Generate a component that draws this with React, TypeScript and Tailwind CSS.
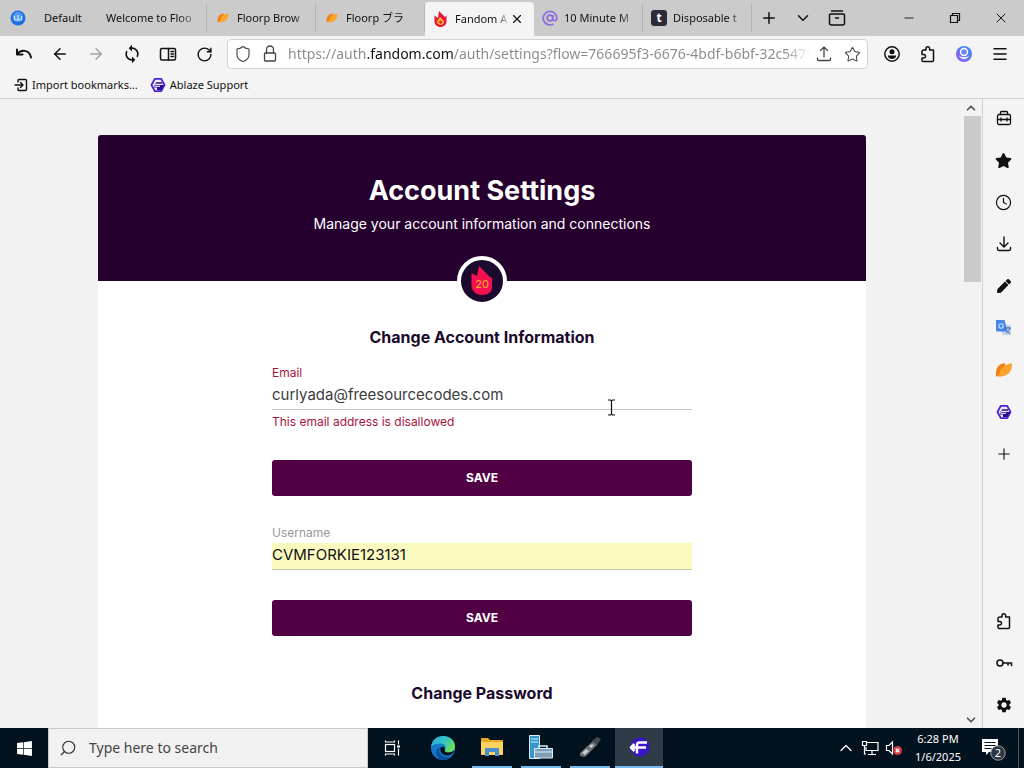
import { ReactNode, useState } from "react";
import {
  ArrowLeft,
  ArrowRight,
  ChevronDown,
  ChevronUp,
  Clock,
  Menu,
  Minus,
  Plus,
  RotateCw,
  Search,
  Shield,
  Star,
  X,
} from "lucide-react";
import { FaPen, FaStar, FaWindows } from "react-icons/fa";
import { MdSettings, MdSync } from "react-icons/md";

type IconProps = { size?: number };

const line = {
  fill: "none",
  stroke: "currentColor",
  strokeLinecap: "round",
  strokeLinejoin: "round",
} as const;

const UndoIcon = () => (
  <svg width="18" height="18" viewBox="0 0 18 18" {...line} strokeWidth="2">
    <path d="M2 4.500v5h5.500" />
    <path d="M2.500 9C5 5 14.500 3.500 16 12.500" />
  </svg>
);

const ReaderIcon = () => (
  <svg width="18" height="18" viewBox="0 0 18 18" {...line} strokeWidth="1.500">
    <rect x="1.500" y="3.500" width="15" height="11.500" rx="1.500" />
    <path d="M9.500 3.500V15M12 6.500h2.500M12 9h2.500M12 11.500h2.500" />
  </svg>
);

const LockIcon = () => (
  <svg width="16" height="18" viewBox="0 0 16 18" {...line} strokeWidth="1.300">
    <rect x="2.500" y="8" width="11" height="8" rx="1" />
    <path d="M4.500 8V4.500a3.500 3.500 0 0 1 7 0V8" />
  </svg>
);

const ShareIcon = () => (
  <svg width="16" height="16" viewBox="0 0 16 16" {...line} strokeWidth="1.300">
    <path d="M8 11V1M4.500 4.500 8 1l3.500 3.500M1.500 12v1.500a1 1 0 0 0 1 1h11a1 1 0 0 0 1-1V12" />
  </svg>
);

const RestoreIcon = () => (
  <svg width="12" height="12" viewBox="0 0 12 12" fill="none" stroke="currentColor" strokeWidth="1.200">
    <path d="M1.500 3.500h7v7h-7zM3.500 3.500v-2h7v7h-2" />
  </svg>
);

const DownloadIcon = () => (
  <svg width="18" height="18" viewBox="0 0 18 18" {...line} strokeWidth="1.400">
    <path d="M9 2v9.500M5 8l4 4 4-4M2.500 12.500V14A1.500 1.500 0 0 0 4 15.500h10a1.500 1.500 0 0 0 1.500-1.500v-1.500" />
  </svg>
);

const AccountIcon = () => (
  <svg width="18" height="18" viewBox="0 0 18 18">
    <circle cx="9" cy="9" r="7.200" fill="none" stroke="currentColor" strokeWidth="1.500" />
    <circle cx="9" cy="6.800" r="2.500" fill="currentColor" />
    <path d="M4.800 10.500h8.400c0 2-1.800 3.500-4.200 3.500s-4.200-1.500-4.200-3.500z" fill="currentColor" />
  </svg>
);

const ProfileIcon = () => (
  <svg width="18" height="18" viewBox="0 0 18 18">
    <defs>
      <linearGradient id="profile" x1="0" y1="1" x2="1" y2="0">
        <stop offset="0" stopColor="#9a4cf0" />
        <stop offset="1" stopColor="#2e9df4" />
      </linearGradient>
    </defs>
    <circle cx="9" cy="9" r="8" fill="url(#profile)" />
    <path d="M4 10.500c1 5 9 5 10 0-2 2-8 2-10 0z" fill="#dfe6ff" />
    <circle cx="9" cy="7" r="3.500" fill="#6f86f5" stroke="#fff" strokeWidth="1.400" />
  </svg>
);

const PuzzleIcon = () => (
  <svg width="18" height="18" viewBox="0 0 18 18" {...line} strokeWidth="1.500">
    <path d="M3 6.500A1.500 1.500 0 0 1 4.500 5H7V3.500a1.800 1.800 0 0 1 3.600 0V5h3.900v10.500a1 1 0 0 1-1 1H4a1 1 0 0 1-1-1V13h1.700a1.800 1.800 0 0 0 0-3.600H3z" />
  </svg>
);

const ToolboxIcon = () => (
  <svg width="18" height="18" viewBox="0 0 18 18" {...line} strokeWidth="1.300">
    <path d="M5.500 5.500V3.500a1 1 0 0 1 1-1h5a1 1 0 0 1 1 1v2" />
    <rect x="2.500" y="5.500" width="13" height="10" rx="1.500" />
    <path d="M2.500 10.500h13M6 9v3M12 9v3" />
  </svg>
);

const TabBoxIcon = () => (
  <svg width="18" height="18" viewBox="0 0 18 18" {...line} strokeWidth="1.500">
    <path d="M3.500 2h11M2.500 5h13a1 1 0 0 1 1 1v8a2 2 0 0 1-2 2h-11a2 2 0 0 1-2-2V6a1 1 0 0 1 1-1zM7.500 9h3" />
  </svg>
);

const ImportIcon = () => (
  <svg width="14" height="14" viewBox="0 0 14 14" {...line} strokeWidth="1.400">
    <path d="M4 4V2.500a1 1 0 0 1 1-1h6.500a1 1 0 0 1 1 1v9a1 1 0 0 1-1 1H5a1 1 0 0 1-1-1V10M1 7h7.500M6.500 4.500 9 7 6.500 9.500" />
  </svg>
);

const AblazeIcon = ({ size = 16 }: IconProps) => (
  <svg width={size} height={size} viewBox="0 0 16 16">
    <path
      d="M4.800 1.800h6.400L14.500 8l-3.300 6.200H4.800L1.500 8z"
      fill="#eeeaff"
      stroke="#4a1fd0"
      strokeWidth="1.800"
      strokeLinejoin="round"
    />
    <path d="M6 5.200h6v1.500H6c-1 0-1.500.6-1.500 1.300h9.500L11.500 13H7v-2.500H4" fill="#2a0d8c" />
    <path d="M5 9.300h5" stroke="#eeeaff" strokeWidth="1.200" />
  </svg>
);

const LeafIcon = ({ size = 16 }: IconProps) => (
  <svg width={size} height={size} viewBox="0 0 16 16">
    <path d="M1 14C0 7 3 2 9 2c1 5-1 10-8 12z" fill="#f57c17" />
    <path d="M3 14c1-7 5-11 12-12 .5 7-3 12-12 12z" fill="#fba52c" />
  </svg>
);

const FlameIcon = () => (
  <svg width="16" height="16" viewBox="0 0 16 16">
    <path d="M6 0 12 6l1.500-1.500V10.500c0 3-2.500 5.500-6 5.500S1.500 13.500 1.500 10.500V4.500L5 7z" fill="#e5173f" />
    <path d="M7 6l4 4c0 2.500-1.200 4-3.500 4S4 12.500 4 10.500z" fill="#ffb62e" />
    <path d="M7.500 9.500l2 1.500-2 2-2-2z" fill="#e5173f" />
  </svg>
);

const TranslateIcon = () => (
  <svg width="18" height="18" viewBox="0 0 18 18">
    <rect x="7" y="6" width="9" height="10" rx="1" fill="#c5d3e8" />
    <path d="M1 1h8.500l3 11.500H2a1 1 0 0 1-1-1z" fill="#4385e8" />
    <circle cx="6" cy="7" r="2.200" fill="none" stroke="#cfe1ff" strokeWidth="1.100" />
    <path d="M10 9h6M13 8v1m2 0c-.5 2-2 4-4 5m0-3 4 4" stroke="#3f6fb8" strokeWidth="1" fill="none" />
  </svg>
);

const KeyIcon = () => (
  <svg width="18" height="18" viewBox="0 0 18 18" {...line} strokeWidth="1.600">
    <circle cx="5" cy="9" r="3" />
    <path d="M8 9h8.500v2.500M13 9v2" />
  </svg>
);

const TaskViewIcon = () => (
  <svg width="18" height="18" viewBox="0 0 18 18" fill="none" stroke="#fff" strokeWidth="1.200">
    <rect x="2.500" y="5.500" width="9" height="7" />
    <path d="M2.500 1.500V3h9V1.500M2.500 16.500V15h9v1.500M15.500 1.500v4M15.500 9.500v7" />
    <path d="M14 6.500h3v2h-3z" fill="#fff" stroke="none" />
  </svg>
);

const EdgeIcon = () => (
  <svg width="26" height="26" viewBox="0 0 26 26">
    <defs>
      <linearGradient id="edge-top" x1="0" y1="0" x2="1" y2="0.500">
        <stop offset="0" stopColor="#2aa7df" />
        <stop offset="0.600" stopColor="#35c6c4" />
        <stop offset="1" stopColor="#6fdc5c" />
      </linearGradient>
    </defs>
    <circle cx="13" cy="13" r="12" fill="#1479c9" />
    <path d="M1.200 11.500C2 5 7 1 13 1c7 0 12 4.500 12 10.500 0 4-3 6-6.500 6-3 0-4.500-1.300-3.500-2.800 2-3-.5-6.200-4.500-6.200-4 0-7.500 1-9.300 3z" fill="url(#edge-top)" />
    <path d="M9.500 12c-2 6 3 11.500 11 10-2.500 2.500-6 3.500-9.500 2.800C5 22.500 4.500 14 9.500 12z" fill="#0c4f9e" />
    <path d="M15 14.700c-1 1.500.5 2.800 3.500 2.800 2 0 4.200-.7 5.500-2-1 3.500-3.500 5-6.500 5-4.500 0-8-3-7-8 1.500-1.500 5-.5 4.500 2.200z" fill="#03121f" />
  </svg>
);

const FolderIcon = () => (
  <svg width="24" height="22" viewBox="0 0 24 22">
    <path d="M1 3a1 1 0 0 1 1-1h6l2 2h12a1 1 0 0 1 1 1v4H1z" fill="#eba827" />
    <path d="M1 6h22v13H1z" fill="#fdd25f" />
    <path d="M5 20v-7a1 1 0 0 1 1-1h12a1 1 0 0 1 1 1v7h-4v-4H9v4z" fill="#4a8ed0" />
  </svg>
);

const ServerIcon = () => (
  <svg width="26" height="26" viewBox="0 0 26 26" stroke="#d8eefc" strokeWidth="1">
    <path d="M1.500 1.500h10v23h-10z" fill="#3596cc" />
    <path d="M3 5h7M3 8h7" />
    <path d="M11 14v-2h8v2" fill="none" strokeWidth="1.500" />
    <path d="M6.500 14.500h18v9.500h-18z" fill="#7f9db4" />
    <path d="M6.500 18h18" />
  </svg>
);

const DriveIcon = () => (
  <svg width="24" height="22" viewBox="0 0 24 22">
    <path d="M2 17 15 5l5 3L7 21l-5-1z" fill="#6d7173" />
    <path d="M14 5l5-4 4 2-4 6z" fill="#45494b" />
    <path d="M4 17l4-4 3 2-4 4zM11 10l3-2 2 1.500-3 2.500z" fill="#c9cccd" />
  </svg>
);

const FloorpIcon = () => (
  <svg width="24" height="24" viewBox="0 0 24 24">
    <circle cx="13" cy="12" r="9.500" fill="#3a14c9" />
    <path d="M20 7.500h-7.500c-1.500 0-2.500 1-2.500 2.500v8.500M4 12.500h15M7.500 9 4 12.500 7.500 16" fill="none" stroke="#fff" strokeWidth="2.500" strokeLinejoin="round" />
  </svg>
);

const GlobeIcon = () => (
  <svg width="16" height="16" viewBox="0 0 16 16">
    <circle cx="8" cy="8" r="7.500" fill="#1f6fe0" />
    <circle cx="8" cy="7" r="5" fill="#4f9bf5" />
    <path d="M4.500 6v4M8 5v5M11.500 6v4M4.500 10h7" stroke="#d4e8ff" strokeWidth="1.200" fill="none" />
  </svg>
);

const MailIcon = () => (
  <svg width="16" height="16" viewBox="0 0 16 16" fill="none" stroke="#8d6ae0" strokeWidth="1.700">
    <circle cx="8" cy="8" r="2.800" />
    <path d="M10.800 5v4c0 2.500 4 2.500 4-1A6.800 6.800 0 1 0 11.500 14" />
  </svg>
);

const TIcon = () => (
  <span className="flex size-4 items-center justify-center rounded-[3px] bg-[#2b2b3c] text-xs font-bold leading-4 text-white">
    t
  </span>
);

const AvatarFlame = () => (
  <svg width="24" height="30" viewBox="0 0 24 30">
    <path d="M9 0 20 11l2 1v9c0 5-4 8-9.500 8S2 26 1.500 20V7L7 10z" fill="#f5104f" />
    <text x="12" y="22" textAnchor="middle" fontSize="11" fontFamily="Inter, sans-serif" fill="#ffb02e">
      20
    </text>
  </svg>
);

const NetworkIcon = () => (
  <svg width="18" height="16" viewBox="0 0 18 16" fill="none" stroke="#fff" strokeWidth="1.200">
    <path d="M6 2.500h11v8H5V7M11 10.500V14M7 14.500h8M1.500 1.500h4v4h-4zM3.500 5.500V14H5" />
  </svg>
);

const MutedIcon = () => (
  <svg width="18" height="16" viewBox="0 0 18 16">
    <path d="M1.500 5.500h2.500L7.500 2v12L4 10.500H1.500z" fill="none" stroke="#fff" strokeWidth="1.200" />
    <circle cx="12.500" cy="10.500" r="4.500" fill="#d33a45" />
    <path d="M10.800 8.800l3.400 3.400M14.200 8.800l-3.400 3.400" stroke="#fff" strokeWidth="1.400" />
  </svg>
);

const NoticeIcon = () => (
  <svg width="26" height="26" viewBox="0 0 26 26">
    <path d="M1 4h16v13H8l-3 3v-3H1z" fill="#fff" />
    <path d="M3.500 7.500h11M3.500 10.500h11M3.500 13.500h7" stroke="#03121f" strokeWidth="1.200" />
    <circle cx="17" cy="18" r="7.200" fill="#2d3742" stroke="#9aa1a8" strokeWidth="1" />
    <text x="17" y="22" textAnchor="middle" fontSize="11" fontFamily="Noto Sans, sans-serif" fill="#fff">
      2
    </text>
  </svg>
);

const tabs: { title: string; icon?: ReactNode; active?: boolean }[] = [
  { title: "Welcome to Floo" },
  { title: "Floorp Brow", icon: <LeafIcon size={12} /> },
  { title: "Floorp ブラ", icon: <LeafIcon size={12} /> },
  { title: "Fandom A", icon: <FlameIcon />, active: true },
  { title: "10 Minute M", icon: <MailIcon /> },
  { title: "Disposable t", icon: <TIcon /> },
];

const TabBar = () => (
  <div className="flex h-9 shrink-0 bg-[#cbcbcb]">
    <button className="flex w-[98px] shrink-0 items-center gap-[18px] pl-2.5">
      <GlobeIcon />
      Default
    </button>
    {tabs.map((tab) => (
      <div
        key={tab.title}
        className={
          tab.active
            ? "mt-0.5 flex min-w-0 max-w-[109px] flex-1 items-center rounded-t-[4px] bg-[#f4f4f4] pl-2 pr-2.5"
            : "flex min-w-0 max-w-[109px] flex-1 items-center pl-2 pr-2"
        }
      >
        <button className="flex min-w-0 flex-1 items-center gap-1.5">
          {tab.icon && <span className="flex w-4 shrink-0 justify-center">{tab.icon}</span>}
          <span className="min-w-0 flex-1 overflow-hidden whitespace-nowrap text-left mask-r-from-75%">
            {tab.title}
          </span>
        </button>
        {tab.active ? (
          <button aria-label="Close tab">
            <X size={14} strokeWidth={2} />
          </button>
        ) : (
          <span className="-mr-2 ml-1 h-7 w-px bg-[#b4b4b4]" />
        )}
      </div>
    ))}
    <div className="flex items-center">
      <button aria-label="New tab" className="flex w-[34px] justify-center"><Plus size={18} strokeWidth={2} /></button>
      <button aria-label="List all tabs" className="flex w-[34px] justify-center"><ChevronDown size={18} strokeWidth={2} /></button>
      <button aria-label="Tab manager" className="flex w-[34px] justify-center"><TabBoxIcon /></button>
    </div>
    <div className="ml-auto flex items-center">
      <button aria-label="Minimize" className="flex w-[46px] justify-center"><Minus size={14} strokeWidth={1.500} /></button>
      <button aria-label="Restore" className="flex w-[46px] justify-center"><RestoreIcon /></button>
      <button aria-label="Close" className="flex w-[46px] justify-center"><X size={16} strokeWidth={1.500} /></button>
    </div>
  </div>
);

const navButtons = [
  { label: "Undo close tab", icon: <UndoIcon /> },
  { label: "Back", icon: <ArrowLeft size={18} strokeWidth={2} /> },
  { label: "Forward", icon: <ArrowRight size={18} strokeWidth={2} className="text-[#a3a3a3]" /> },
  { label: "Sync", icon: <MdSync size={20} /> },
  { label: "Reader sidebar", icon: <ReaderIcon /> },
  { label: "Reload", icon: <RotateCw size={17} strokeWidth={2} /> },
];

const menuButtons = [
  { label: "Account", icon: <AccountIcon /> },
  { label: "Extensions", icon: <PuzzleIcon /> },
  { label: "Profile", icon: <ProfileIcon /> },
  { label: "Menu", icon: <Menu size={18} strokeWidth={2} /> },
];

const NavBar = () => {
  const [url, setUrl] = useState(
    "https://auth.fandom.com/auth/settings?flow=766695f3-6676-4bdf-b6bf-32c54757"
  );

  return (
    <div className="flex h-9 shrink-0 items-center bg-[#f4f4f4] px-1.5">
      {navButtons.map((n) => (
        <button key={n.label} aria-label={n.label} className="flex w-9 shrink-0 justify-center">
          {n.icon}
        </button>
      ))}
      <div className="ml-[5px] mr-1.5 flex h-[30px] min-w-0 flex-1 items-center rounded-[4px] border border-[#d2d2d2] bg-white pl-1.5 pr-px text-[#444]">
        <span className="flex w-[18px] shrink-0 justify-center"><Shield size={18} strokeWidth={1.500} /></span>
        <span className="ml-2.5 flex w-4 shrink-0 justify-center"><LockIcon /></span>
        {/* the host part of the address is darker than the rest */}
        <input
          aria-label="Address"
          value={url}
          onChange={(e) => setUrl(e.target.value)}
          className="ml-2.5 min-w-0 flex-1 bg-[linear-gradient(90deg,#8a8a8a_78px,#111_78px,#111_166px,#8a8a8a_166px)] bg-clip-text text-sm leading-5 text-transparent outline-none mask-r-from-95%"
        />
        <button aria-label="Share" className="flex w-7 justify-center"><ShareIcon /></button>
        <button aria-label="Bookmark" className="flex w-7 justify-center"><Star size={17} strokeWidth={1.500} /></button>
      </div>
      {menuButtons.map((n) => (
        <button key={n.label} aria-label={n.label} className="flex w-9 shrink-0 justify-center">
          {n.icon}
        </button>
      ))}
    </div>
  );
};

const BookmarkBar = () => (
  <div className="flex h-[27px] shrink-0 items-center gap-3 border-b border-[#cfcfcf] bg-[#f4f4f4] pl-3.5">
    <a href="#import" className="flex items-center gap-1"><ImportIcon />Import bookmarks...</a>
    <a href="#support" className="flex items-center gap-1"><AblazeIcon />Ablaze Support</a>
  </div>
);

const SaveButton = () => (
  <button className="mt-[30px] h-9 w-full rounded-[3px] bg-[#520044] text-xs font-bold text-white">
    SAVE
  </button>
);

const AccountSettings = () => {
  const [email, setEmail] = useState("curlyada@freesourcecodes.com");
  const [username, setUsername] = useState("CVMFORKIE123131");

  return (
    <main className="flex min-w-0 flex-1 justify-center overflow-hidden bg-[#f2f2f2] px-6 pt-9 font-[Inter,sans-serif]">
      <div className="w-full max-w-3xl shrink-0">
        <header className="relative rounded-t-[3px] bg-[#26002e] pb-12 pt-10 text-center text-white">
          <h1 className="text-[27px] font-bold leading-8">Account Settings</h1>
          <p className="mt-2 text-sm leading-[18px]">Manage your account information and connections</p>
          <div className="absolute inset-x-0 -bottom-[25px] flex justify-center">
            <div className="flex size-[50px] items-center justify-center rounded-full border-4 border-white bg-[#1b0a2e]">
              <AvatarFlame />
            </div>
          </div>
        </header>
        <div className="flex h-full flex-col items-center bg-white px-4 pt-11 text-[#1c0a2c]">
          <h2 className="text-base font-bold leading-6">Change Account Information</h2>
          <form className="mt-4 w-full max-w-[420px]" onSubmit={(e) => e.preventDefault()}>
            <label htmlFor="email" className="block text-xs leading-4 text-[#a8123e]">Email</label>
            <div className="relative">
              <input
                id="email"
                value={email}
                onChange={(e) => setEmail(e.target.value)}
                className="mt-0.5 block h-[27px] w-full border-b border-[#c9c9c9] pb-1 text-[15px] leading-5 text-[#3c3c3c] outline-none"
              />
              <svg width="9" height="17" viewBox="0 0 9 17" className="absolute left-[335px] top-4" fill="none" stroke="#111" strokeWidth="1.200">
                <path d="M1 1h2.500l1 1 1-1H8M4.500 2v13M1 16h2.500l1-1 1 1H8" />
              </svg>
            </div>
            <p className="mt-1 text-xs leading-4 text-[#a8123e]">This email address is disallowed</p>
            <SaveButton />
          </form>
          <form className="mt-[29px] w-full max-w-[420px]" onSubmit={(e) => e.preventDefault()}>
            <label htmlFor="username" className="block text-xs leading-4 text-[#9a9a9a]">Username</label>
            <input
              id="username"
              value={username}
              onChange={(e) => setUsername(e.target.value)}
              className="mt-0.5 block h-[27px] w-full border-b border-[#c9c9b0] bg-[#fafabf] pb-1 text-[15px] leading-5 text-[#111] outline-none"
            />
            <SaveButton />
          </form>
          <h2 className="mt-[45px] text-base font-bold leading-6">Change Password</h2>
        </div>
      </div>
    </main>
  );
};

const ScrollBar = () => (
  <div className="flex w-[18px] shrink-0 flex-col bg-[#f2f2f2] text-[#555]">
    <button aria-label="Scroll up" className="flex h-[17px] items-center"><ChevronUp size={14} strokeWidth={3} /></button>
    <div className="h-[166px] w-[17px] bg-[#cacaca]" />
    <button aria-label="Scroll down" className="mt-auto flex h-[17px] items-center"><ChevronDown size={14} strokeWidth={3} /></button>
  </div>
);

const panels = [
  { label: "Tools", icon: <ToolboxIcon /> },
  { label: "Bookmarks", icon: <FaStar size={17} /> },
  { label: "History", icon: <Clock size={17} strokeWidth={1.700} /> },
  { label: "Downloads", icon: <DownloadIcon /> },
  { label: "Notes", icon: <FaPen size={14} /> },
  { label: "Translate", icon: <TranslateIcon /> },
  { label: "Floorp", icon: <LeafIcon size={18} /> },
  { label: "Ablaze", icon: <AblazeIcon size={16} /> },
  { label: "Add panel", icon: <Plus size={18} strokeWidth={1.500} /> },
];

const panelTools = [
  { label: "Add-ons", icon: <PuzzleIcon /> },
  { label: "Passwords", icon: <KeyIcon /> },
  { label: "Settings", icon: <MdSettings size={20} /> },
];

const PanelButtons = ({ items }: { items: typeof panels }) => (
  <div className="flex flex-col items-center gap-6">
    {items.map((n) => (
      <button key={n.label} aria-label={n.label} className="flex size-[18px] items-center justify-center">
        {n.icon}
      </button>
    ))}
  </div>
);

const SideBar = () => (
  <aside className="flex w-[42px] shrink-0 flex-col justify-between border-l border-[#d0d0d0] bg-[#f4f4f4] pb-3.5 pt-2.5">
    <PanelButtons items={panels} />
    <PanelButtons items={panelTools} />
  </aside>
);

const apps = [
  { label: "Edge", icon: <EdgeIcon />, open: false, active: false },
  { label: "File Explorer", icon: <FolderIcon />, open: true, active: false },
  { label: "Server Manager", icon: <ServerIcon />, open: true, active: false },
  { label: "Drive", icon: <DriveIcon />, open: true, active: false },
  { label: "Floorp", icon: <FloorpIcon />, open: true, active: true },
];

const TaskBar = () => (
  <footer className="flex h-10 shrink-0 bg-[#03121f] text-white">
    <button aria-label="Start" className="flex w-12 shrink-0 items-center justify-center"><FaWindows size={17} /></button>
    <label className="flex w-80 items-center gap-3 border border-[#c8c8c8] bg-[#f1f1f1] pl-2.5 text-[#333]">
      <Search size={18} strokeWidth={1.500} className="-scale-x-100" />
      <input
        aria-label="Search"
        placeholder="Type here to search"
        className="min-w-0 flex-1 text-sm outline-none placeholder:text-[#444]"
      />
    </label>
    <button aria-label="Task view" className="mr-[3px] flex w-12 shrink-0 items-center justify-center"><TaskViewIcon /></button>
    <div className="flex gap-px">
      {apps.map((app) => (
        <button
          key={app.label}
          aria-label={app.label}
          className={app.active ? "flex w-12 flex-col items-center bg-[#2f3c47]" : "flex w-12 flex-col items-center"}
        >
          <span className="flex flex-1 items-center">{app.icon}</span>
          {app.open && <span className={app.active ? "h-0.5 w-full bg-[#76b9ed]" : "h-0.5 w-10 bg-[#76b9ed]"} />}
        </button>
      ))}
    </div>
    <div className="ml-auto flex items-center">
      <button aria-label="Hidden icons" className="flex w-6 justify-center"><ChevronUp size={20} strokeWidth={1.500} /></button>
      <button aria-label="Network" className="flex w-6 justify-center"><NetworkIcon /></button>
      <button aria-label="Volume" className="flex w-6 justify-center"><MutedIcon /></button>
      <div className="w-16 text-center leading-[18px]">
        <div>6:28 PM</div>
        <div>1/6/2025</div>
      </div>
      <button aria-label="Notifications" className="flex w-12 justify-center"><NoticeIcon /></button>
      <div className="h-full w-1.5 border-l border-[#4b5661]" />
    </div>
  </footer>
);

const App = () => {
  return (
    <div className="flex h-screen flex-col overflow-hidden font-['Noto_Sans','Noto_Sans_CJK_JP',sans-serif] text-[11px] text-[#111]">
      <TabBar />
      <NavBar />
      <BookmarkBar />
      <div className="flex min-h-0 flex-1">
        <AccountSettings />
        <ScrollBar />
        <SideBar />
      </div>
      <TaskBar />
    </div>
  );
};

export default App;
